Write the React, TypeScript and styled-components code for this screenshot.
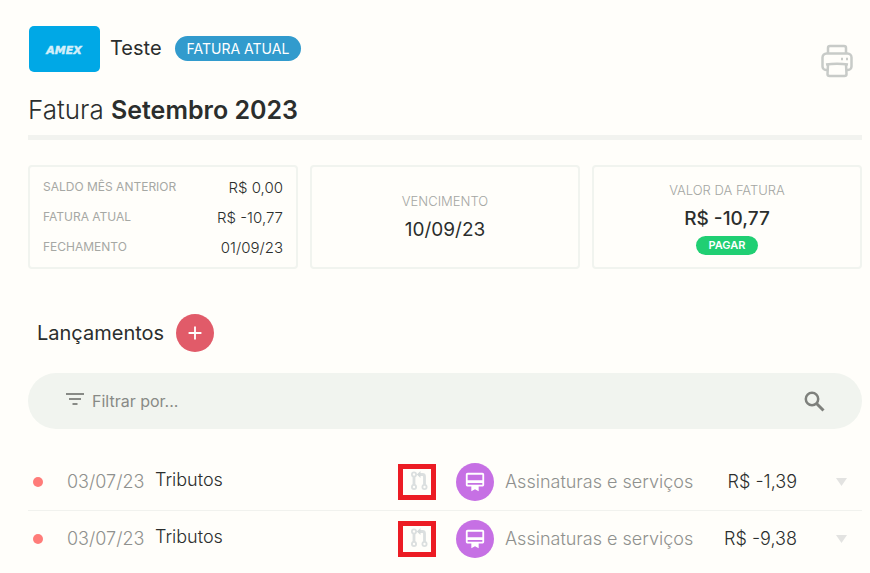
import React from "react";
import styled, { createGlobalStyle } from "styled-components";
import { MdAdd, MdCardMembership } from "react-icons/md";

const GlobalStyle = createGlobalStyle`
  * { box-sizing: border-box; }
  body {
    margin: 0;
    background: #fffefa;
    color: #2b2e2d;
    font-family: Inter, "Liberation Sans", sans-serif;
    font-weight: 300;
  }
  button { border: 0; padding: 0; font: inherit; cursor: pointer; }
`;

const Page = styled.main`
  padding: 26px 8px 0 28px;
`;

const Header = styled.header`
  display: flex;
  justify-content: space-between;
  align-items: flex-start;
  border-bottom: 5px solid #f2f3ef;
  height: 114px;
`;

const Account = styled.div`
  display: flex;
  align-items: center;
`;

const CardLogo = styled.svg`
  display: block;
  width: 72px;
  height: 46px;
  margin-right: 10px;
`;

const AccountName = styled.span`
  font-size: 20px;
  font-weight: 400;
  line-height: 24px;
  margin-right: 13px;
  padding-bottom: 2px;
`;

const CurrentTag = styled.span`
  background: #329bcd;
  color: #fff;
  font-size: 14px;
  font-weight: 400;
  line-height: 25px;
  padding: 0 12px;
  border-radius: 13px;
  margin-bottom: 1px;
`;

const Title = styled.h1`
  margin: 22px 0 0;
  font-size: 26px;
  line-height: 32px;
  font-weight: 300;

  strong { font-size: 25px; font-weight: 600; }
`;

const PrintButton = styled.button`
  display: flex;
  background: none;
  color: #c8cbc8;
  margin: 18px 9px 0 0;
`;

const Cards = styled.section`
  display: grid;
  grid-template-columns: repeat(3, 1fr);
  gap: 12px;
  margin-top: 25px;
`;

const Card = styled.div<{ $lowered?: boolean }>`
  height: 104px;
  border: 2px solid #f1f4ef;
  border-radius: 4px;
  padding-top: ${(p) => (p.$lowered ? "4px" : "0")};
  display: flex;
  flex-direction: column;
  align-items: center;
  justify-content: center;
`;

const Balances = styled.dl`
  width: 100%;
  margin: 0;
  padding: 0 13px;
`;

const Balance = styled.div`
  display: flex;
  justify-content: space-between;
  line-height: 30px;

  dt { font-size: 12px; font-weight: 400; color: #a6a8a4; }
  dd { margin: 0; font-size: 15px; line-height: 32px; height: 30px; }
`;

const Caption = styled.span`
  font-size: 13px;
  line-height: 20px;
  color: #a4a6a3;
`;

const Figure = styled.span<{ $strong?: boolean }>`
  margin-top: 2px;
  font-size: 19px;
  line-height: 34px;
  font-weight: ${(p) => (p.$strong ? 500 : 400)};
`;

const PayButton = styled.button`
  && {
    background: #20cf73;
    color: #fff;
    font-size: 11px;
    font-weight: 600;
    line-height: 19px;
    padding: 0 13px;
    border-radius: 10px;
  }
`;

const SectionHead = styled.div`
  display: flex;
  align-items: center;
  gap: 12px;
  margin: 45px 0 21px 9px;
`;

const SectionTitle = styled.h2`
  margin: 0;
  font-size: 20px;
  line-height: 24px;
  font-weight: 400;
`;

const AddButton = styled.button`
  display: flex;
  align-items: center;
  justify-content: center;
  width: 38px;
  height: 38px;
  border-radius: 50%;
  background: #e15b69;
  color: #fff;
`;

const FilterBar = styled.form`
  display: flex;
  align-items: center;
  height: 56px;
  padding: 0 37px 0 38px;
  border-radius: 28px;
  background: #f1f4ef;
  color: #888a86;
`;

const FilterInput = styled.input`
  flex: 1;
  min-width: 0;
  border: 0;
  outline: 0;
  background: none;
  margin-left: 8px;
  padding: 0;
  color: #2b2e2d;
  font: 16px Inter, sans-serif;

  &::placeholder { color: #888a86; opacity: 1; }
`;

const SearchButton = styled.button`
  display: flex;
  background: none;
  color: #7e807c;
`;

const Entries = styled.table`
  width: 100%;
  margin-top: 25px;
  border-collapse: separate;
  border-spacing: 0;
  table-layout: fixed;

  td { border-bottom: 1px solid #f1f2ee; }
  tr:last-child td { border-bottom-color: transparent; }

  col:nth-child(1) { width: 39px; }
  col:nth-child(2) { width: 88px; }
  col:nth-child(4) { width: 58px; }
  col:nth-child(5) { width: 49px; }
  col:nth-child(6) { width: 200px; }
  col:nth-child(7) { width: 92px; }
  col:nth-child(8) { width: 65px; }
`;

const Cell = styled.td<{ $muted?: boolean; $right?: boolean }>`
  height: 57px;
  padding: 0;
  font-size: 18px;
  line-height: 24px;
  white-space: nowrap;
  color: ${(p) => (p.$muted ? "#8f918e" : "#2b2e2d")};
  text-align: ${(p) => (p.$right ? "right" : "left")};
`;

const Description = styled(Cell)`
  padding-bottom: 4px;
`;

const StatusDot = styled.span`
  display: block;
  width: 10px;
  height: 10px;
  margin-left: 5px;
  border-radius: 50%;
  background: #ff7c79;
`;

const MergeButton = styled.button`
  && {
    display: flex;
    width: 38px;
    height: 36px;
    border: 5px solid #ec1c24;
    background: #fffefa;
    padding: 2px 0 0 8px;
  }
`;

const CategoryBadge = styled.span`
  display: flex;
  align-items: center;
  justify-content: center;
  width: 38px;
  height: 38px;
  border-radius: 50%;
  background: #c670e4;
  color: #fff;
`;

const ExpandButton = styled.button`
  display: flex;
  margin-left: auto;
  margin-right: 15px;
  background: none;
`;

const AmexLogo = () => (
  <CardLogo viewBox="0 0 72 46" role="img" aria-label="Amex">
    <rect x="1" width="71" height="46" rx="5" fill="#00a8e6" />
    <text
      x="36"
      y="28"
      textAnchor="middle"
      fontFamily="DejaVu Sans"
      fontWeight="700"
      fontStyle="italic"
      fontSize="11"
      fill="#d3effa"
      stroke="#d3effa"
      strokeWidth="0.500"
    >
      AMEX
    </text>
  </CardLogo>
);

const PrinterIcon = () => (
  <svg width="32" height="34" viewBox="0 0 32 34" fill="none" stroke="currentColor" strokeWidth="2.500" strokeLinejoin="round">
    <path d="M7 9.500V4a2 2 0 0 1 2-2h14a2 2 0 0 1 2 2v5.500" />
    <path d="M6.500 26H5a3.500 3.500 0 0 1-3.500-3.500v-9A4 4 0 0 1 5.500 9.500h21a4 4 0 0 1 4 4v9A3.500 3.500 0 0 1 27 26h-1.500" />
    <path d="M5 20.500q11-1.500 22 0M7 20.500l-.5 9.500a2 2 0 0 0 2 2h15a2 2 0 0 0 2-2l-.5-9.500" />
    <path d="M20 15h2M25 15h2" />
  </svg>
);

const FilterIcon = () => (
  <svg width="18" height="18" viewBox="0 0 18 18" fill="none" stroke="currentColor" strokeWidth="2">
    <path d="M0 2h18M3 7h12M6.500 12h5" />
  </svg>
);

const SearchIcon = () => (
  <svg width="21" height="21" viewBox="0 0 21 21" fill="none" stroke="currentColor" strokeWidth="2.500">
    <circle cx="8" cy="8" r="6.200" />
    <path d="M12.500 12.500l7 7" strokeWidth="3" />
  </svg>
);

const PullRequestIcon = () => (
  <svg width="17" height="20" viewBox="0 0 17 20" fill="none" stroke="#dbdfdf" strokeWidth="1.800">
    <circle cx="3" cy="3.500" r="2.100" />
    <circle cx="3" cy="16" r="2.100" />
    <circle cx="13.500" cy="16" r="2.100" />
    <path d="M3 5.500V14M8.500 3.500h3a2 2 0 0 1 2 2V14" strokeWidth="2.800" />
    <path d="M9.500 0v7L5.800 3.500z" fill="#d5dada" stroke="none" />
  </svg>
);

const entries = [
  { date: "03/07/23", description: "Tributos", category: "Assinaturas e serviços", amount: "R$ -1,39" },
  { date: "03/07/23", description: "Tributos", category: "Assinaturas e serviços", amount: "R$ -9,38" },
];

const balances = [
  ["SALDO MÊS ANTERIOR", "R$ 0,00"],
  ["FATURA ATUAL", "R$ -10,77"],
  ["FECHAMENTO", "01/09/23"],
];

export default function App() {
  return (
    <Page>
      <GlobalStyle />
      <Header>
        <div>
          <Account>
            <AmexLogo />
            <AccountName>Teste</AccountName>
            <CurrentTag>FATURA ATUAL</CurrentTag>
          </Account>
          <Title>
            Fatura <strong>Setembro 2023</strong>
          </Title>
        </div>
        <PrintButton aria-label="Imprimir">
          <PrinterIcon />
        </PrintButton>
      </Header>

      <Cards>
        <Card>
          <Balances>
            {balances.map(([label, value]) => (
              <Balance key={label}>
                <dt>{label}</dt>
                <dd>{value}</dd>
              </Balance>
            ))}
          </Balances>
        </Card>
        <Card $lowered>
          <Caption>VENCIMENTO</Caption>
          <Figure>10/09/23</Figure>
        </Card>
        <Card>
          <Caption>VALOR DA FATURA</Caption>
          <Figure $strong>R$ -10,77</Figure>
          <PayButton>PAGAR</PayButton>
        </Card>
      </Cards>

      <SectionHead>
        <SectionTitle>Lançamentos</SectionTitle>
        <AddButton aria-label="Adicionar lançamento">
          <MdAdd size={22} />
        </AddButton>
      </SectionHead>

      <FilterBar onSubmit={(e) => e.preventDefault()}>
        <FilterIcon />
        <FilterInput aria-label="Filtrar" placeholder="Filtrar por..." />
        <SearchButton type="submit" aria-label="Pesquisar">
          <SearchIcon />
        </SearchButton>
      </FilterBar>

      <Entries>
        <colgroup>
          <col /><col /><col /><col /><col /><col /><col /><col />
        </colgroup>
        <tbody>
          {entries.map((entry) => (
            <tr key={entry.amount}>
              <Cell><StatusDot /></Cell>
              <Cell $muted>{entry.date}</Cell>
              <Description>{entry.description}</Description>
              <Cell>
                <MergeButton aria-label="Unificar lançamento"><PullRequestIcon /></MergeButton>
              </Cell>
              <Cell>
                <CategoryBadge><MdCardMembership size={22} /></CategoryBadge>
              </Cell>
              <Cell $muted>{entry.category}</Cell>
              <Cell $right>{entry.amount}</Cell>
              <Cell>
                <ExpandButton aria-label="Ver detalhes">
                  <svg width="11" height="8" viewBox="0 0 11 8"><path d="M0 0h11L5.500 8z" fill="#e3e3e1" /></svg>
                </ExpandButton>
              </Cell>
            </tr>
          ))}
        </tbody>
      </Entries>
    </Page>
  );
}
